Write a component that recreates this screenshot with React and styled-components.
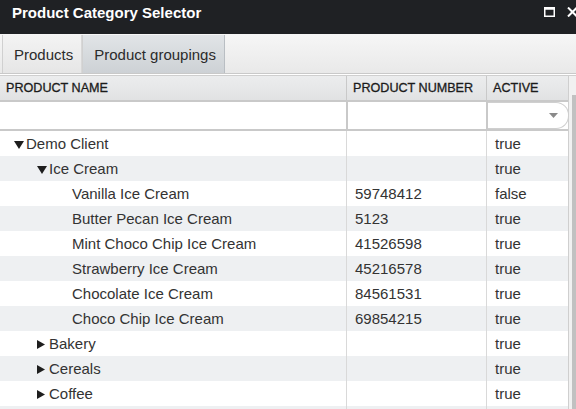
import React from 'react'
import styled, { createGlobalStyle } from 'styled-components'

const GlobalStyle = createGlobalStyle`
  html, body {
    margin: 0;
    padding: 0;
    background: #ffffff;
  }
  body {
    font-family: "Liberation Sans", Arial, sans-serif;
    overflow: hidden;
  }
`

const Window = styled.div`
  width: 576px;
  height: 409px;
  display: flex;
  flex-direction: column;
  overflow: hidden;
  background: #fff;
`

const TitleBar = styled.div`
  height: 34px;
  flex: none;
  display: flex;
  align-items: center;
  justify-content: space-between;
  padding: 0 0 10px 12px;
  box-sizing: border-box;
  background: #1f2124;
  color: #fff;
`

const Title = styled.div`
  font-size: 15px;
  font-weight: 700;
`

const TitleIcons = styled.div`
  display: flex;
  align-items: center;
  gap: 12px;
  margin-right: -2px;
`

const TabStrip = styled.div`
  height: 40px;
  flex: none;
  display: flex;
  align-items: flex-end;
  padding-left: 2px;
  box-sizing: border-box;
  background: linear-gradient(#f6f6f6, #e9e9e9);
  border-bottom: 1px solid #c9c9c9;
`

const Tab = styled.div`
  height: 38px;
  display: flex;
  align-items: center;
  padding: 0 8px 0 11px;
  box-sizing: border-box;
  font-size: 15px;
  color: #2b2b2b;
  border-left: 1px solid #d0d0d0;
  border-right: 1px solid ${(p) => (p.$active ? '#b9bec3' : '#d8d8d8')};
  background: ${(p) =>
    p.$active
      ? 'linear-gradient(#e1e4e7, #cdd1d5)'
      : 'linear-gradient(#f3f3f3, #e6e6e6)'};
`

const GridWrap = styled.div`
  flex: 1;
  display: flex;
  margin-top: 1px;
  border-top: 1px solid #cfcfcf;
  min-height: 0;
`

const Table = styled.div`
  flex: 1;
  display: flex;
  flex-direction: column;
  min-width: 0;
  border-right: 1px solid #cfcfcf;
`

const Cols = '346px 140px 1fr'

const HeaderRow = styled.div`
  display: grid;
  grid-template-columns: ${Cols};
  height: 24px;
  background: linear-gradient(#ecedee, #e1e2e3);
  border-bottom: 2px solid #c9c9c9;
`

const HeaderCell = styled.div`
  display: flex;
  align-items: center;
  padding-left: 6px;
  font-size: 12.6px;
  color: #1b1b1b;
  border-left: ${(p) => (p.$first ? 'none' : '1px solid #c9c9c9')};
  -webkit-text-stroke: 0.3px #1b1b1b;
`

const FilterRow = styled.div`
  display: grid;
  grid-template-columns: ${Cols};
  height: 27px;
  background: #fff;
  border-bottom: 2px solid #c9c9c9;
`

const FilterCell = styled.div`
  border-left: ${(p) => (p.$first ? 'none' : '2px solid #c9c9c9')};
  background: #fff;
`

const Dropdown = styled.div`
  height: 100%;
  box-sizing: border-box;
  border: 1px solid #cfcfcf;
  border-left: none;
  border-radius: 0 13px 13px 0;
  display: flex;
  align-items: center;
  justify-content: flex-end;
  padding-right: 10px;
  margin-right: -1px;
`

const Body = styled.div`
  flex: 1;
  overflow: hidden;
`

const Row = styled.div`
  display: grid;
  grid-template-columns: ${Cols};
  height: 25px;
  background: ${(p) => (p.$alt ? '#eef0f2' : '#ffffff')};
`

const Cell = styled.div`
  display: flex;
  align-items: center;
  font-size: 15px;
  color: #333333;
  white-space: nowrap;
  padding-left: ${(p) => p.$pad || 8}px;
  border-left: ${(p) => (p.$first ? 'none' : '1px solid #d9d9d9')};
`

const Toggle = styled.svg`
  flex: none;
  margin-right: ${(p) => (p.$open ? 2 : 4)}px;
  margin-top: 2px;
`

const Scrollbar = styled.div`
  width: 7px;
  flex: none;
  background: #f1f1f1;
  display: flex;
  flex-direction: column;
  padding-top: 19px;
  padding-left: 3px;
  box-sizing: border-box;
`

const Thumb = styled.div`
  flex: 1;
  background: #c1c1c1;
`

const rows = [
  { name: 'Demo Client', level: 0, toggle: 'open', number: '', active: 'true' },
  { name: 'Ice Cream', level: 1, toggle: 'open', number: '', active: 'true' },
  { name: 'Vanilla Ice Cream', level: 2, number: '59748412', active: 'false' },
  { name: 'Butter Pecan Ice Cream', level: 2, number: '5123', active: 'true' },
  { name: 'Mint Choco Chip Ice Cream', level: 2, number: '41526598', active: 'true' },
  { name: 'Strawberry Ice Cream', level: 2, number: '45216578', active: 'true' },
  { name: 'Chocolate Ice Cream', level: 2, number: '84561531', active: 'true' },
  { name: 'Choco Chip Ice Cream', level: 2, number: '69854215', active: 'true' },
  { name: 'Bakery', level: 1, toggle: 'closed', number: '', active: 'true' },
  { name: 'Cereals', level: 1, toggle: 'closed', number: '', active: 'true' },
  { name: 'Coffee', level: 1, toggle: 'closed', number: '', active: 'true' },
  { name: '', level: 1, number: '', active: '' },
]

const namePad = (r) => {
  if (r.level === 0) return 14
  if (r.toggle) return 37
  return 72
}

const Arrow = ({ open }) =>
  open ? (
    <Toggle $open width="10" height="8" viewBox="0 0 10 8">
      <path d="M0 0 L10 0 L5 8 Z" fill="#1e1e1e" />
    </Toggle>
  ) : (
    <Toggle width="8" height="9" viewBox="0 0 8 9">
      <path d="M0 0 L8 4.5 L0 9 Z" fill="#1e1e1e" />
    </Toggle>
  )

const App = () => {
  return (
    <Window>
      <GlobalStyle />
      <TitleBar>
        <Title>Product Category Selector</Title>
        <TitleIcons>
          <svg width="11" height="10" viewBox="0 0 11 10">
            <rect x="0.75" y="0.75" width="9.5" height="8.5" fill="none" stroke="#fff" strokeWidth="1.5" />
            <rect x="0.75" y="0.75" width="9.5" height="2" fill="#fff" />
          </svg>
          <svg width="11" height="10" viewBox="0 0 11 10">
            <path d="M1 0.5 L10 9.5 M10 0.5 L1 9.5" stroke="#fff" strokeWidth="2" />
          </svg>
        </TitleIcons>
      </TitleBar>
      <TabStrip>
        <Tab>Products</Tab>
        <Tab $active>Product groupings</Tab>
      </TabStrip>
      <GridWrap>
        <Table>
          <HeaderRow>
            <HeaderCell $first>PRODUCT NAME</HeaderCell>
            <HeaderCell>PRODUCT NUMBER</HeaderCell>
            <HeaderCell>ACTIVE</HeaderCell>
          </HeaderRow>
          <FilterRow>
            <FilterCell $first />
            <FilterCell />
            <FilterCell>
              <Dropdown>
                <svg width="9" height="5" viewBox="0 0 9 5">
                  <path d="M0 0 L9 0 L4.5 5 Z" fill="#8a8a8a" />
                </svg>
              </Dropdown>
            </FilterCell>
          </FilterRow>
          <Body>
            {rows.map((r, i) => (
              <Row key={i} $alt={i % 2 === 1}>
                <Cell $first $pad={namePad(r)}>
                  {r.toggle && <Arrow open={r.toggle === 'open'} />}
                  {r.name}
                </Cell>
                <Cell>{r.number}</Cell>
                <Cell>{r.active}</Cell>
              </Row>
            ))}
          </Body>
        </Table>
        <Scrollbar>
          <Thumb />
        </Scrollbar>
      </GridWrap>
    </Window>
  )
}

export default App
